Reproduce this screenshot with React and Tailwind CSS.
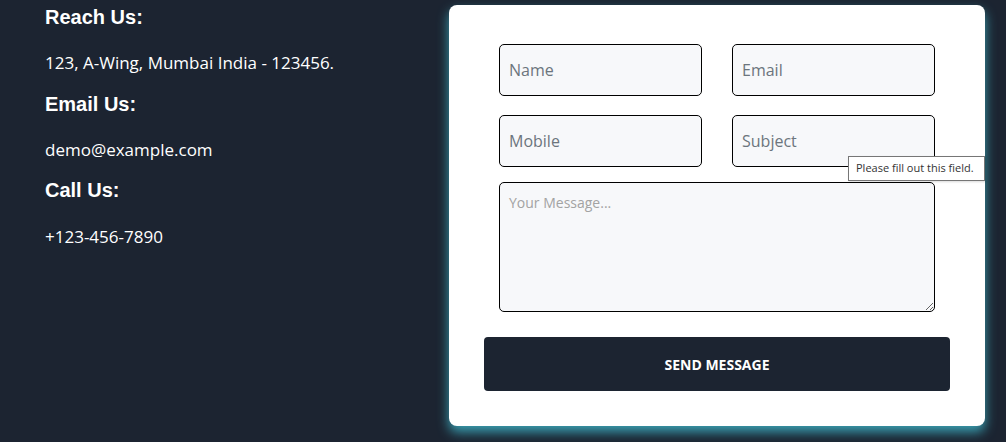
export default function App() {
  return (
    <div className="relative flex h-[442px] w-[1006px] overflow-hidden bg-[#1c2431] font-['Open_Sans',sans-serif]">
      <div className="w-[449px] shrink-0 pl-[45px] pt-[5px] text-white">
        <h3 className="mb-[22px] font-['Liberation_Sans',Arial,sans-serif] text-[20px] font-bold leading-[24px]">Reach Us:</h3>
        <p className="mb-[17px] text-[17px] leading-[24px]">123, A-Wing, Mumbai India - 123456.</p>
        <h3 className="mb-[22px] font-['Liberation_Sans',Arial,sans-serif] text-[20px] font-bold leading-[24px]">Email Us:</h3>
        <p className="mb-[16px] text-[17px] leading-[24px]">demo@example.com</p>
        <h3 className="mb-[23px] font-['Liberation_Sans',Arial,sans-serif] text-[20px] font-bold leading-[24px]">Call Us:</h3>
        <p className="text-[17px] leading-[24px]">+123-456-7890</p>
      </div>

      <div className="mt-[5px] h-[421px] w-[536px] shrink-0 rounded-[8px] bg-white shadow-[0_6px_12px_rgba(58,160,178,1)]">
        <form className="px-[35px] pt-[39px]" onSubmit={(e) => e.preventDefault()}>
          <div className="px-[15px]">
            <div className="grid grid-cols-2 gap-x-[30px] gap-y-[19px]">
              <input
                placeholder="Name"
                className="h-[52px] rounded-[5px] border border-black bg-[#f7f8fa] px-[9px] text-[16px] text-[#555] outline-none placeholder:text-[#6c757d]"
              />
              <input
                placeholder="Email"
                className="h-[52px] rounded-[5px] border border-black bg-[#f7f8fa] px-[9px] text-[16px] text-[#555] outline-none placeholder:text-[#6c757d]"
              />
              <input
                placeholder="Mobile"
                className="h-[52px] rounded-[5px] border border-black bg-[#f7f8fa] px-[9px] text-[16px] text-[#555] outline-none placeholder:text-[#6c757d]"
              />
              <input
                placeholder="Subject"
                className="h-[52px] rounded-[5px] border border-black bg-[#f7f8fa] px-[9px] text-[16px] text-[#555] outline-none placeholder:text-[#6c757d]"
              />
            </div>
            <textarea
              placeholder="Your Message..."
              className="mt-[15px] block h-[130px] w-full resize-y rounded-[5px] border border-black bg-[#f7f8fa] px-[9px] py-[9px] text-[14px] text-[#555] outline-none placeholder:text-[#a3a3a3]"
            />
          </div>
          <button
            type="submit"
            className="mt-[25px] h-[54px] w-full rounded-[4px] bg-[#1c2431] text-[14px] font-bold text-white"
          >
            SEND MESSAGE
          </button>
        </form>
      </div>

      <div className="absolute left-[848px] top-[156px] flex h-[25px] w-[137px] items-center border border-[#767676] bg-white px-[7px] text-[11px] text-[#333] shadow-[1px_1px_2px_rgba(0,0,0,0.15)]">
        Please fill out this field.
      </div>
    </div>
  )
}
